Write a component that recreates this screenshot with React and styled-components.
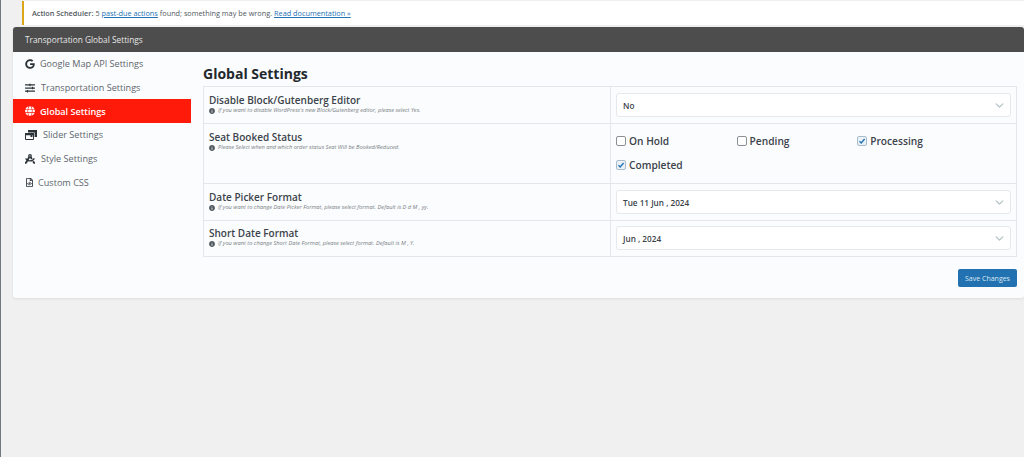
import React from 'react'
import styled, { createGlobalStyle } from 'styled-components'
import { FaGoogle, FaSlidersH, FaGlobe, FaDraftingCompass, FaRegFileCode, FaInfoCircle } from 'react-icons/fa'
import { FiChevronDown } from 'react-icons/fi'

const GlobalStyle = createGlobalStyle`
  html, body { margin: 0; padding: 0; }
  body {
    background: #f0f0f1;
    font-family: "Open Sans", "Liberation Sans", sans-serif;
    color: #3c434a;
  }
`

const Page = styled.div`
  height: 457px;
  overflow: hidden;
  border-left: 1px solid #72777c;
  padding: 0 0 0 12px;
  box-sizing: border-box;
`

const Notice = styled.div`
  margin: 1px 0 2px 9px;
  height: 24px;
  box-sizing: border-box;
  background: #fff;
  border-left: 2px solid #dba617;
  padding-left: 8px;
  display: flex;
  align-items: center;
  font-size: 7.3px;
  color: #50575e;
  gap: 2px;
  b { font-weight: 600; }
  a { color: #2271b1; text-decoration: underline; }
`

const Panel = styled.div`
  background: #fafcfe;
  border-radius: 3px;
  box-shadow: 0 1px 3px rgba(0, 0, 0, 0.08);
  height: 271px;
`

const PanelHeader = styled.div`
  height: 25px;
  background: #4d4d4d;
  border-radius: 3px 3px 0 0;
  color: #e6e6e6;
  font-size: 8.3px;
  display: flex;
  align-items: center;
  padding-left: 12px;
`

const Body = styled.div`
  display: flex;
`

const Sidebar = styled.nav`
  width: 178px;
  flex-shrink: 0;
  display: flex;
  flex-direction: column;
`

const NavItem = styled.div`
  height: 23.7px;
  display: flex;
  align-items: center;
  padding-left: 12px;
  gap: ${p => p.$gap}px;
  font-size: 9.1px;
  color: ${p => (p.$active ? '#fff' : '#5f666c')};
  background: ${p => (p.$active ? '#ff1a0a' : 'transparent')};
  font-weight: ${p => (p.$active ? 600 : 400)};
  svg { color: ${p => (p.$active ? '#fff' : '#2c3338')}; font-size: ${p => p.$size}px; flex-shrink: 0; }
`

const Content = styled.main`
  flex: 1;
  padding: 13px 7px 0 12px;
`

const Title = styled.h2`
  margin: 0;
  height: 21px;
  line-height: 18px;
  font-size: 14px;
  font-weight: 700;
  color: #23282d;
`

const Table = styled.div`
  border: 1px solid #e3e6ea;
`

const Row = styled.div`
  display: grid;
  grid-template-columns: 407px 1fr;
  height: ${p => p.$h}px;
  box-sizing: border-box;
  & + & { border-top: 1px solid #e3e6ea; }
`

const LabelCell = styled.div`
  border-right: 1px solid #e3e6ea;
  padding: ${p => (p.$tight ? 5 : 6)}px 0 0 5px;
`

const Label = styled.div`
  font-size: 10px;
  line-height: 14px;
  font-weight: 600;
  color: #3c434a;
`

const Hint = styled.div`
  display: flex;
  align-items: center;
  gap: 3px;
  font-size: 5.7px;
  line-height: 7px;
  font-style: italic;
  color: #787c82;
  svg { font-size: 6px; color: #50575e; flex-shrink: 0; }
`

const ValueCell = styled.div`
  padding: ${p => (p.$tight ? 5 : 6)}px 5px 0 5px;
`

const Select = styled.div`
  height: 24px;
  box-sizing: border-box;
  background: #fff;
  border: 1px solid #e6e8eb;
  border-radius: 3px;
  display: flex;
  align-items: center;
  justify-content: space-between;
  padding: 0 4px 0 6px;
  font-size: 8.2px;
  font-weight: 600;
  color: #3c434a;
  svg { font-size: 13px; color: #b4c6c8; stroke-width: 2.6; }
`

const Checks = styled.div`
  display: grid;
  grid-template-columns: repeat(3, 120.6px);
  grid-auto-rows: 24px;
`

const Check = styled.label`
  display: flex;
  align-items: center;
  gap: 3px;
  font-size: 10.2px;
  font-weight: 600;
  color: #3c434a;
`

const Box = styled.span`
  width: 10px;
  height: 10px;
  box-sizing: border-box;
  border: 1px solid ${p => (p.$on ? '#a9bccb' : '#8c8f94')};
  border-radius: 2px;
  background: ${p => (p.$on ? '#eaf1f7' : '#fff')};
  display: inline-flex;
  align-items: center;
  justify-content: center;
  svg { display: block; }
`

const Footer = styled.div`
  display: flex;
  justify-content: flex-end;
  padding-top: 12px;
`

const SaveButton = styled.button`
  width: 59px;
  height: 18px;
  padding: 0;
  background: #2271b1;
  border: 0;
  border-radius: 2px;
  color: #dbe9f4;
  font-family: inherit;
  font-size: 7px;
`

// two overlapping picture frames, the react-icons one reads too flat at this size
const SliderIcon = () => (
  <svg width="12" height="10" viewBox="0 0 12 10" fill="none">
    <path d="M3 0h9v7H9.6V2.4H3z" fill="currentColor" />
    <path d="M.5 3.5h8v6h-8z" stroke="currentColor" />
    <path d="M0 3h9v2.2H0zM5.5 5h2v2h-2z" fill="currentColor" />
  </svg>
)

const navItems = [
  { label: 'Google Map API Settings', icon: <FaGoogle />, gap: 5, size: 10 },
  { label: 'Transportation Settings', icon: <FaSlidersH />, gap: 6, size: 10 },
  { label: 'Global Settings', icon: <FaGlobe />, gap: 5, size: 10, active: true },
  { label: 'Slider Settings', icon: <SliderIcon />, gap: 6, size: 12 },
  { label: 'Style Settings', icon: <FaDraftingCompass />, gap: 6, size: 10 },
  { label: 'Custom CSS', icon: <FaRegFileCode />, gap: 4, size: 9 },
]

const statuses = [
  { label: 'On Hold' },
  { label: 'Pending' },
  { label: 'Processing', on: true },
  { label: 'Completed', on: true },
]

function SettingRow({ h, label, hint, tight, tightLabel, children }) {
  return (
    <Row $h={h}>
      <LabelCell $tight={tightLabel}>
        <Label>{label}</Label>
        <Hint><FaInfoCircle />{hint}</Hint>
      </LabelCell>
      <ValueCell $tight={tight}>{children}</ValueCell>
    </Row>
  )
}

function Dropdown({ value }) {
  return (
    <Select>
      {value}
      <FiChevronDown />
    </Select>
  )
}

export default function App() {
  return (
    <Page>
      <GlobalStyle />
      <Notice>
        <b>Action Scheduler:</b> 5 <a>past-due actions</a> found; something may be wrong. <a>Read documentation »</a>
      </Notice>
      <Panel>
        <PanelHeader>Transportation Global Settings</PanelHeader>
        <Body>
          <Sidebar>
            {navItems.map(item => (
              <NavItem key={item.label} $active={item.active} $gap={item.gap} $size={item.size}>
                {item.icon}
                {item.label}
              </NavItem>
            ))}
          </Sidebar>
          <Content>
            <Title>Global Settings</Title>
            <Table>
              <SettingRow h={36} label="Disable Block/Gutenberg Editor" hint="If you want to disable WordPress's new Block/Gutenberg editor, please select Yes.">
                <Dropdown value="No" />
              </SettingRow>
              <SettingRow h={60} tight label="Seat Booked Status" hint="Please Select when and which order status Seat Will be Booked/Reduced.">
                <Checks>
                  {statuses.map(s => (
                    <Check key={s.label}>
                      <Box $on={s.on}>
                        {s.on && (
                          <svg width="8" height="8" viewBox="0 0 8 8">
                            <path d="M1.5 4.2 3.2 6 6.6 2" fill="none" stroke="#2271b1" strokeWidth="1.3" />
                          </svg>
                        )}
                      </Box>
                      {s.label}
                    </Check>
                  ))}
                </Checks>
              </SettingRow>
              <SettingRow h={37} label="Date Picker Format" hint="If you want to change Date Picker Format, please select format. Default is D d M , yy.">
                <Dropdown value="Tue 11 Jun , 2024" />
              </SettingRow>
              <SettingRow h={36} tight tightLabel label="Short Date Format" hint="If you want to change Short Date Format, please select format. Default is M , Y.">
                <Dropdown value="Jun , 2024" />
              </SettingRow>
            </Table>
            <Footer>
              <SaveButton>Save Changes</SaveButton>
            </Footer>
          </Content>
        </Body>
      </Panel>
    </Page>
  )
}
